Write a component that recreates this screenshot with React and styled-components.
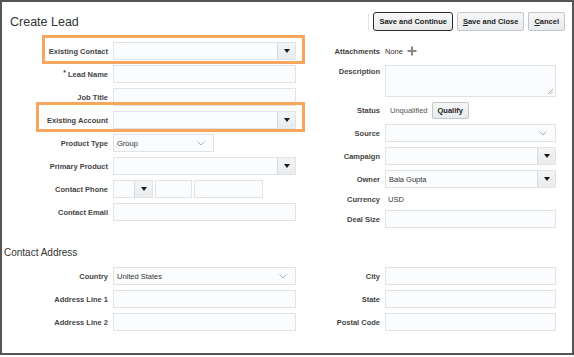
import React from "react";
import styled, { createGlobalStyle } from "styled-components";

const GlobalStyle = createGlobalStyle`
  body {
    margin: 0;
    background: #fff;
    font-family: "Liberation Sans", Arial, sans-serif;
  }
`;

const Frame = styled.div`
  width: 574px;
  height: 355px;
  box-sizing: border-box;
  border: 2px solid #555;
  display: flex;
  flex-direction: column;
  color: #333;
`;

const Header = styled.div`
  display: flex;
  justify-content: space-between;
  align-items: center;
  padding: 10px 7px 0 8px;
`;

const Title = styled.div`
  font-size: 12.5px;
  color: #333;
`;

const Toolbar = styled.div`
  display: flex;
  align-items: center;
  gap: 4px;
`;

const Separator = styled.div`
  width: 1px;
  height: 18px;
  background: #e3e3e3;
`;

const Button = styled.button`
  height: ${(p) => p.$h || 19}px;
  padding: 0 5px;
  font-family: inherit;
  font-size: 7.5px;
  font-weight: bold;
  color: #222;
  background: linear-gradient(#f6f7f8, #e8eaec);
  border: ${(p) => (p.$focus ? "1.5px solid #2a2a2a" : "1px solid #c3c7cb")};
  border-radius: ${(p) => (p.$focus ? 3 : 2)}px;
  box-sizing: border-box;
  white-space: nowrap;

  u {
    text-decoration: underline;
  }
`;

const FormSection = styled.div`
  display: flex;
  gap: 9px;
  margin-top: ${(p) => p.$top}px;
`;

const Column = styled.div`
  display: grid;
  grid-template-columns: ${(p) => p.$label}px ${(p) => p.$field}px;
  column-gap: 5px;
  row-gap: 5px;
  align-content: start;
`;

const Label = styled.div`
  position: relative;
  display: flex;
  align-items: ${(p) => (p.$top ? "flex-start" : "center")};
  justify-content: flex-end;
  padding-top: ${(p) => (p.$top ? 2 : 0)}px;
  font-size: 7.5px;
  font-weight: bold;
  color: #444;
  white-space: nowrap;

  sup {
    font-size: 7px;
    margin-right: 2px;
    position: relative;
    top: -1px;
    line-height: 0;
  }
`;

const Highlight = styled.div`
  position: absolute;
  left: ${(p) => p.$left}px;
  top: ${(p) => p.$top}px;
  width: ${(p) => p.$width}px;
  height: ${(p) => p.$height}px;
  border: 3px solid #f8a55e;
  box-sizing: border-box;
  pointer-events: none;
`;

const Box = styled.div`
  height: ${(p) => p.$h || 18}px;
  width: ${(p) => (p.$w ? `${p.$w}px` : "auto")};
  box-sizing: border-box;
  border: 1px solid #e0e4e7;
  background: #fbfcfd;
  display: flex;
  align-items: center;
  position: relative;
  font-size: 7.5px;
  color: #333;
`;

const BoxText = styled.span`
  flex: 1;
  padding-left: 3px;
`;

const DropButton = styled.div`
  width: 18px;
  height: 100%;
  box-sizing: border-box;
  border-left: 1px solid #d7dbde;
  background: linear-gradient(#f3f4f5, #e9ebed);
  display: flex;
  align-items: center;
  justify-content: center;
  border-radius: 0 2px 2px 0;
`;

const Chevron = styled.svg`
  margin-right: 8px;
`;

const Resize = styled.svg`
  position: absolute;
  right: 2px;
  bottom: 2px;
`;

const PhoneGroup = styled.div`
  display: flex;
  gap: 2px;
`;

const Value = styled.div`
  display: flex;
  align-items: center;
  gap: 4px;
  font-size: 7.5px;
  color: ${(p) => (p.$muted ? "#555" : "#333")};
  padding-left: ${(p) => p.$pad || 0}px;
  height: ${(p) => p.$h || 18}px;
`;

const SectionTitle = styled.div`
  font-size: 10px;
  line-height: 12px;
  color: #333;
  padding-left: 2px;
  margin-top: 19px;
`;

const Triangle = () => (
  <svg width="6" height="4" viewBox="0 0 6 4">
    <path d="M0 0 H6 L3 4 Z" fill="#1a1a1a" />
  </svg>
);

const ChevronDown = () => (
  <Chevron width="8" height="5" viewBox="0 0 8 5">
    <path d="M0.5 0.5 L4 4 L7.5 0.5" fill="none" stroke="#a8a8a8" strokeWidth="0.9" />
  </Chevron>
);

const Plus = () => (
  <svg width="10" height="10" viewBox="0 0 10 10">
    <path d="M5 0.5 V9.5 M0.5 5 H9.5" stroke="#888" strokeWidth="2" />
  </svg>
);

function TextField({ value, w }) {
  return (
    <Box $w={w}>
      <BoxText>{value}</BoxText>
    </Box>
  );
}

function LovField({ value, w }) {
  return (
    <Box $w={w}>
      <BoxText>{value}</BoxText>
      <DropButton>
        <Triangle />
      </DropButton>
    </Box>
  );
}

function SelectField({ value, w }) {
  return (
    <Box $w={w}>
      <BoxText>{value}</BoxText>
      <ChevronDown />
    </Box>
  );
}

function TextArea() {
  return (
    <Box $h={32}>
      <Resize width="6" height="6" viewBox="0 0 6 6">
        <path d="M1 6 L6 1 M3.5 6 L6 3.5" stroke="#888" strokeWidth="0.7" />
      </Resize>
    </Box>
  );
}

export default function App() {
  return (
    <>
      <GlobalStyle />
      <Frame>
        <Header>
          <Title>Create Lead</Title>
          <Toolbar>
            <Separator />
            <Button $focus>Save and Continue</Button>
            <Button>
              <u>S</u>ave and Close
            </Button>
            <Button>
              <u>C</u>ancel
            </Button>
          </Toolbar>
        </Header>

        <FormSection $top={11}>
          <Column $label={106} $field={183}>
            <Label>
              <Highlight $left={40} $top={-7} $width={263} $height={29} />
              Existing Contact
            </Label>
            <LovField />

            <Label>
              <sup>*</sup>Lead Name
            </Label>
            <TextField />

            <Label>Job Title</Label>
            <TextField />

            <Label>
              <Highlight $left={34} $top={-9} $width={269} $height={30} />
              Existing Account
            </Label>
            <LovField />

            <Label>Product Type</Label>
            <SelectField value="Group" w={101} />

            <Label>Primary Product</Label>
            <LovField />

            <Label>Contact Phone</Label>
            <PhoneGroup>
              <LovField w={40} />
              <TextField w={37} />
              <TextField w={69} />
            </PhoneGroup>

            <Label>Contact Email</Label>
            <TextField />
          </Column>

          <Column $label={75} $field={171}>
            <Label>Attachments</Label>
            <Value>
              None
              <Plus />
            </Value>

            <Label $top>Description</Label>
            <TextArea />

            <Label>Status</Label>
            <Value $muted $pad={5} $h={17}>
              Unqualified
              <Button $h={17}>Qualify</Button>
            </Value>

            <Label>Source</Label>
            <SelectField />

            <Label>Campaign</Label>
            <LovField />

            <Label>Owner</Label>
            <LovField value="Bala Gupta" />

            <Label>Currency</Label>
            <Value $pad={3} $h={12}>
              USD
            </Value>

            <Label>Deal Size</Label>
            <TextField />
          </Column>
        </FormSection>

        <SectionTitle>Contact Address</SectionTitle>

        <FormSection $top={8}>
          <Column $label={106} $field={183}>
            <Label>Country</Label>
            <SelectField value="United States" />

            <Label>Address Line 1</Label>
            <TextField />

            <Label>Address Line 2</Label>
            <TextField />
          </Column>

          <Column $label={75} $field={171}>
            <Label>City</Label>
            <TextField />

            <Label>State</Label>
            <TextField />

            <Label>Postal Code</Label>
            <TextField />
          </Column>
        </FormSection>
      </Frame>
    </>
  );
}
